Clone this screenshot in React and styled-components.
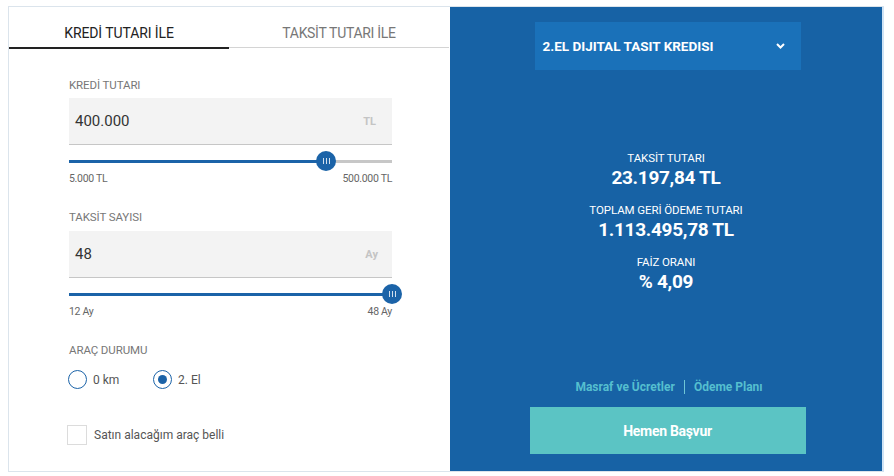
import React from "react";
import styled, { createGlobalStyle } from "styled-components";

const Global = createGlobalStyle`
    body {
        margin: 0;
        background: #ffffff;
        font-family: "Roboto", "Liberation Sans", sans-serif;
    }
`;

const Page = styled.div`
    padding: 6px 10px 4px 8px;
`;

const Card = styled.div`
    display: flex;
    height: 464px;
    border: 1px solid #dbe4ec;
    border-right: 2px solid #cfe3f5;
`;

const Left = styled.div`
    width: 441px;
    display: flex;
    flex-direction: column;
`;

const Tabs = styled.div`
    display: flex;
`;

const Tab = styled.div`
    width: 220px;
    text-align: center;
    padding: 17px 0 5px;
    line-height: 18px;
    font-size: 14px;
    letter-spacing: ${(p) => (p.$active ? "-0.1px" : "-0.3px")};
    color: ${(p) => (p.$active ? "#222" : "#777")};
    border-bottom: ${(p) => (p.$active ? "2px solid #222" : "1px solid #d4d4d4")};
    margin-bottom: ${(p) => (p.$active ? "0" : "1px")};
`;

const Form = styled.div`
    padding: 29px 58px 0 60px;
    display: flex;
    flex-direction: column;
`;

const Group = styled.div`
    margin-bottom: 25px;
`;

const Label = styled.div`
    font-size: 11.5px;
    line-height: 14px;
    color: #777;
    letter-spacing: -0.1px;
    margin-bottom: ${(p) => p.$mb || 6}px;
`;

const InputBox = styled.div`
    height: 46px;
    background: #f3f3f3;
    border-bottom: 1px solid #c6c6c6;
    display: flex;
    align-items: center;
    justify-content: space-between;
    padding: 0 16px 0 6px;
`;

const Value = styled.span`
    font-size: 15px;
    color: #333;
`;

const Unit = styled.span`
    font-size: 11px;
    font-weight: 700;
    color: #c4c4c4;
    margin-right: ${(p) => p.$mr || 0}px;
`;

const Slider = styled.div`
    position: relative;
    height: 20px;
    margin-top: 6px;
    display: flex;
    align-items: center;
`;

const Track = styled.div`
    flex: 1;
    height: 3px;
    background: #c7c7c7;
    position: relative;
`;

const Fill = styled.div`
    height: 3px;
    background: #1b63a8;
`;

const Thumb = styled.div`
    position: absolute;
    top: 0;
    width: 20px;
    height: 20px;
    margin-left: -10px;
    border-radius: 50%;
    background: #1b63a8;
    display: flex;
    align-items: center;
    justify-content: center;
`;

const Range = styled.div`
    display: flex;
    justify-content: space-between;
    margin-top: 1px;
    font-size: 10.5px;
    line-height: 13px;
    color: #666;
    letter-spacing: -0.3px;
`;

const Radios = styled.div`
    display: flex;
    gap: 17px;
    margin-top: 7px;
    margin-left: -1px;
`;

const RadioItem = styled.div`
    display: flex;
    align-items: center;
    gap: 6px;
    width: 68px;
    font-size: 12px;
    color: #555;
`;

const Circle = styled.div`
    width: 17px;
    height: 17px;
    border: 1.5px solid #1b63a8;
    border-radius: 50%;
    display: flex;
    align-items: center;
    justify-content: center;
    &::after {
        content: "";
        width: 9px;
        height: 9px;
        border-radius: 50%;
        background: ${(p) => (p.$on ? "#1b63a8" : "transparent")};
    }
`;

const CheckRow = styled.div`
    display: flex;
    align-items: center;
    gap: 7px;
    margin-top: 36px;
    margin-left: -2px;
    font-size: 12px;
    color: #555;
`;

const Box = styled.div`
    width: 18px;
    height: 18px;
    border: 1px solid #dcdcdc;
`;

const Right = styled.div`
    flex: 1;
    background: #1762a5;
    display: flex;
    flex-direction: column;
    align-items: center;
    padding: 15px 0 17px;
`;

const Select = styled.div`
    width: 266px;
    height: 48px;
    margin-left: 3px;
    box-sizing: border-box;
    background: #1a71b9;
    display: flex;
    align-items: center;
    justify-content: space-between;
    padding: 0 16px 0 8px;
    color: #fff;
    font-size: 13.5px;
    font-weight: 700;
    letter-spacing: 0;
`;

const Results = styled.div`
    margin-top: 81px;
    display: flex;
    flex-direction: column;
    align-items: center;
    color: #fff;
`;

const ResLabel = styled.div`
    font-size: 11.5px;
    line-height: 14px;
    letter-spacing: -0.1px;
    margin-top: ${(p) => (p.$first ? 0 : 14)}px;
`;

const ResValue = styled.div`
    font-size: 19px;
    font-weight: 700;
    line-height: 22px;
    margin-top: 2px;
    letter-spacing: -0.3px;
`;

const Links = styled.div`
    margin-top: auto;
    margin-left: 6px;
    display: flex;
    align-items: center;
    gap: 9px;
    font-size: 12px;
    line-height: 14px;
    font-weight: 700;
    color: #55bfcf;
    letter-spacing: 0;
`;

const Sep = styled.span`
    width: 1px;
    height: 14px;
    background: #6fc6d6;
`;

const Button = styled.div`
    margin-top: 13px;
    margin-left: 3px;
    width: 276px;
    height: 47px;
    background: #5bc4c4;
    color: #fff;
    font-size: 14px;
    font-weight: 700;
    display: flex;
    align-items: center;
    justify-content: center;
    letter-spacing: -0.3px;
`;

function Grip() {
    return (
        <svg width="7" height="6" viewBox="0 0 7 6">
            <path d="M0.5 0v6M3.5 0v6M6.5 0v6" stroke="#fff" strokeWidth="1" opacity="0.8" />
        </svg>
    );
}

function RangeSlider({ pct }) {
    return (
        <Slider>
            <Track>
                <Fill style={{ width: pct + "%" }} />
            </Track>
            <Thumb style={{ left: pct + "%" }}>
                <Grip />
            </Thumb>
        </Slider>
    );
}

export default function App() {
    return (
        <Page>
            <Global />
            <Card>
                <Left>
                    <Tabs>
                        <Tab $active>KREDİ TUTARI İLE</Tab>
                        <Tab>TAKSİT TUTARI İLE</Tab>
                    </Tabs>
                    <Form>
                        <Group>
                            <Label>KREDİ TUTARI</Label>
                            <InputBox>
                                <Value>400.000</Value>
                                <Unit>TL</Unit>
                            </InputBox>
                            <RangeSlider pct={79.6} />
                            <Range>
                                <span>5.000 TL</span>
                                <span>500.000 TL</span>
                            </Range>
                        </Group>
                        <Group>
                            <Label $mb={7}>TAKSİT SAYISI</Label>
                            <InputBox>
                                <Value>48</Value>
                                <Unit $mr={-2}>Ay</Unit>
                            </InputBox>
                            <RangeSlider pct={100} />
                            <Range>
                                <span>12 Ay</span>
                                <span>48 Ay</span>
                            </Range>
                        </Group>
                        <Label $mb={0}>ARAÇ DURUMU</Label>
                        <Radios>
                            <RadioItem>
                                <Circle />0 km
                            </RadioItem>
                            <RadioItem>
                                <Circle $on />2. El
                            </RadioItem>
                        </Radios>
                        <CheckRow>
                            <Box />
                            Satın alacağım araç belli
                        </CheckRow>
                    </Form>
                </Left>
                <Right>
                    <Select>
                        2.EL DIJITAL TASIT KREDISI
                        <svg width="9" height="6" viewBox="0 0 9 6">
                            <path d="M1 1l3.5 3.5L8 1" stroke="#fff" strokeWidth="2" fill="none" />
                        </svg>
                    </Select>
                    <Results>
                        <ResLabel $first>TAKSİT TUTARI</ResLabel>
                        <ResValue>23.197,84 TL</ResValue>
                        <ResLabel>TOPLAM GERİ ÖDEME TUTARI</ResLabel>
                        <ResValue>1.113.495,78 TL</ResValue>
                        <ResLabel>FAİZ ORANI</ResLabel>
                        <ResValue>% 4,09</ResValue>
                    </Results>
                    <Links>
                        <span>Masraf ve Ücretler</span>
                        <Sep />
                        <span>Ödeme Planı</span>
                    </Links>
                    <Button>Hemen Başvur</Button>
                </Right>
            </Card>
        </Page>
    );
}
